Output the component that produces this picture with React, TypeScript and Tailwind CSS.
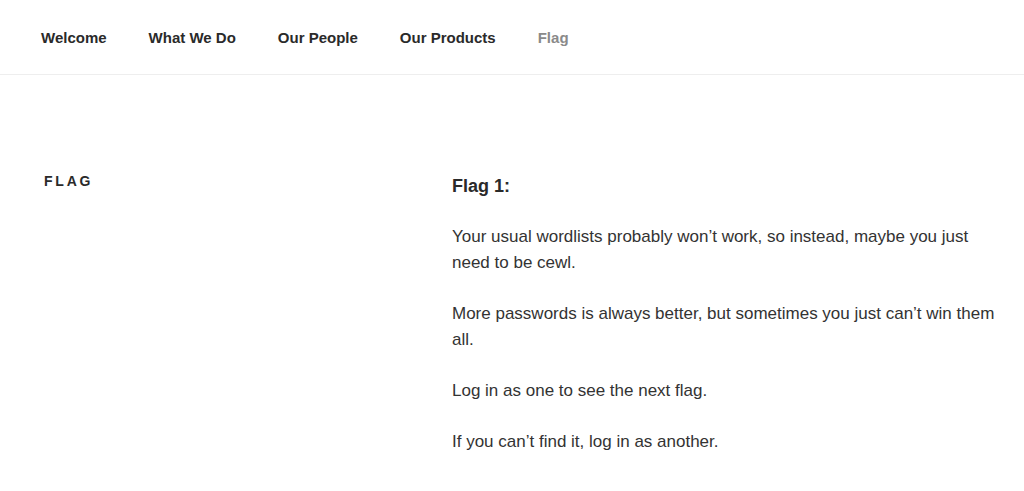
const navItems = ["Welcome", "What We Do", "Our People", "Our Products", "Flag"];

const paragraphs = [
  "Your usual wordlists probably won\u2019t work, so instead, maybe you just need to be cewl.",
  "More passwords is always better, but sometimes you just can\u2019t win them all.",
  "Log in as one to see the next flag.",
  "If you can\u2019t find it, log in as another.",
];

export default function App() {
  return (
    <div className="min-h-screen bg-white font-['Liberation_Sans',Arial,sans-serif] text-[#333]">
      <header className="flex h-[75px] items-center gap-[42px] border-b border-[#eeeeee] pl-[41px] pt-[2px]">
        {navItems.map((item) => (
          <a
            key={item}
            href="#"
            className={
              item === "Flag"
                ? "text-[15px] font-bold text-[#8a8a8a]"
                : "text-[15px] font-bold text-[#2a2a2a]"
            }
          >
            {item}
          </a>
        ))}
      </header>

      <main className="flex pt-[98px] pl-[44px]">
        <div className="w-[408px] shrink-0">
          <h2 className="-mt-[2px] text-[14px] leading-[20px] font-bold tracking-[0.2em] text-[#2a2a2a]">FLAG</h2>
        </div>
        <div className="w-[556px] text-[17px] leading-[26px]">
          <p className="text-[18px] font-bold text-[#2a2a2a]">Flag 1:</p>
          {paragraphs.map((text) => (
            <p key={text} className="mt-[25px]">
              {text}
            </p>
          ))}
        </div>
      </main>
    </div>
  );
}
